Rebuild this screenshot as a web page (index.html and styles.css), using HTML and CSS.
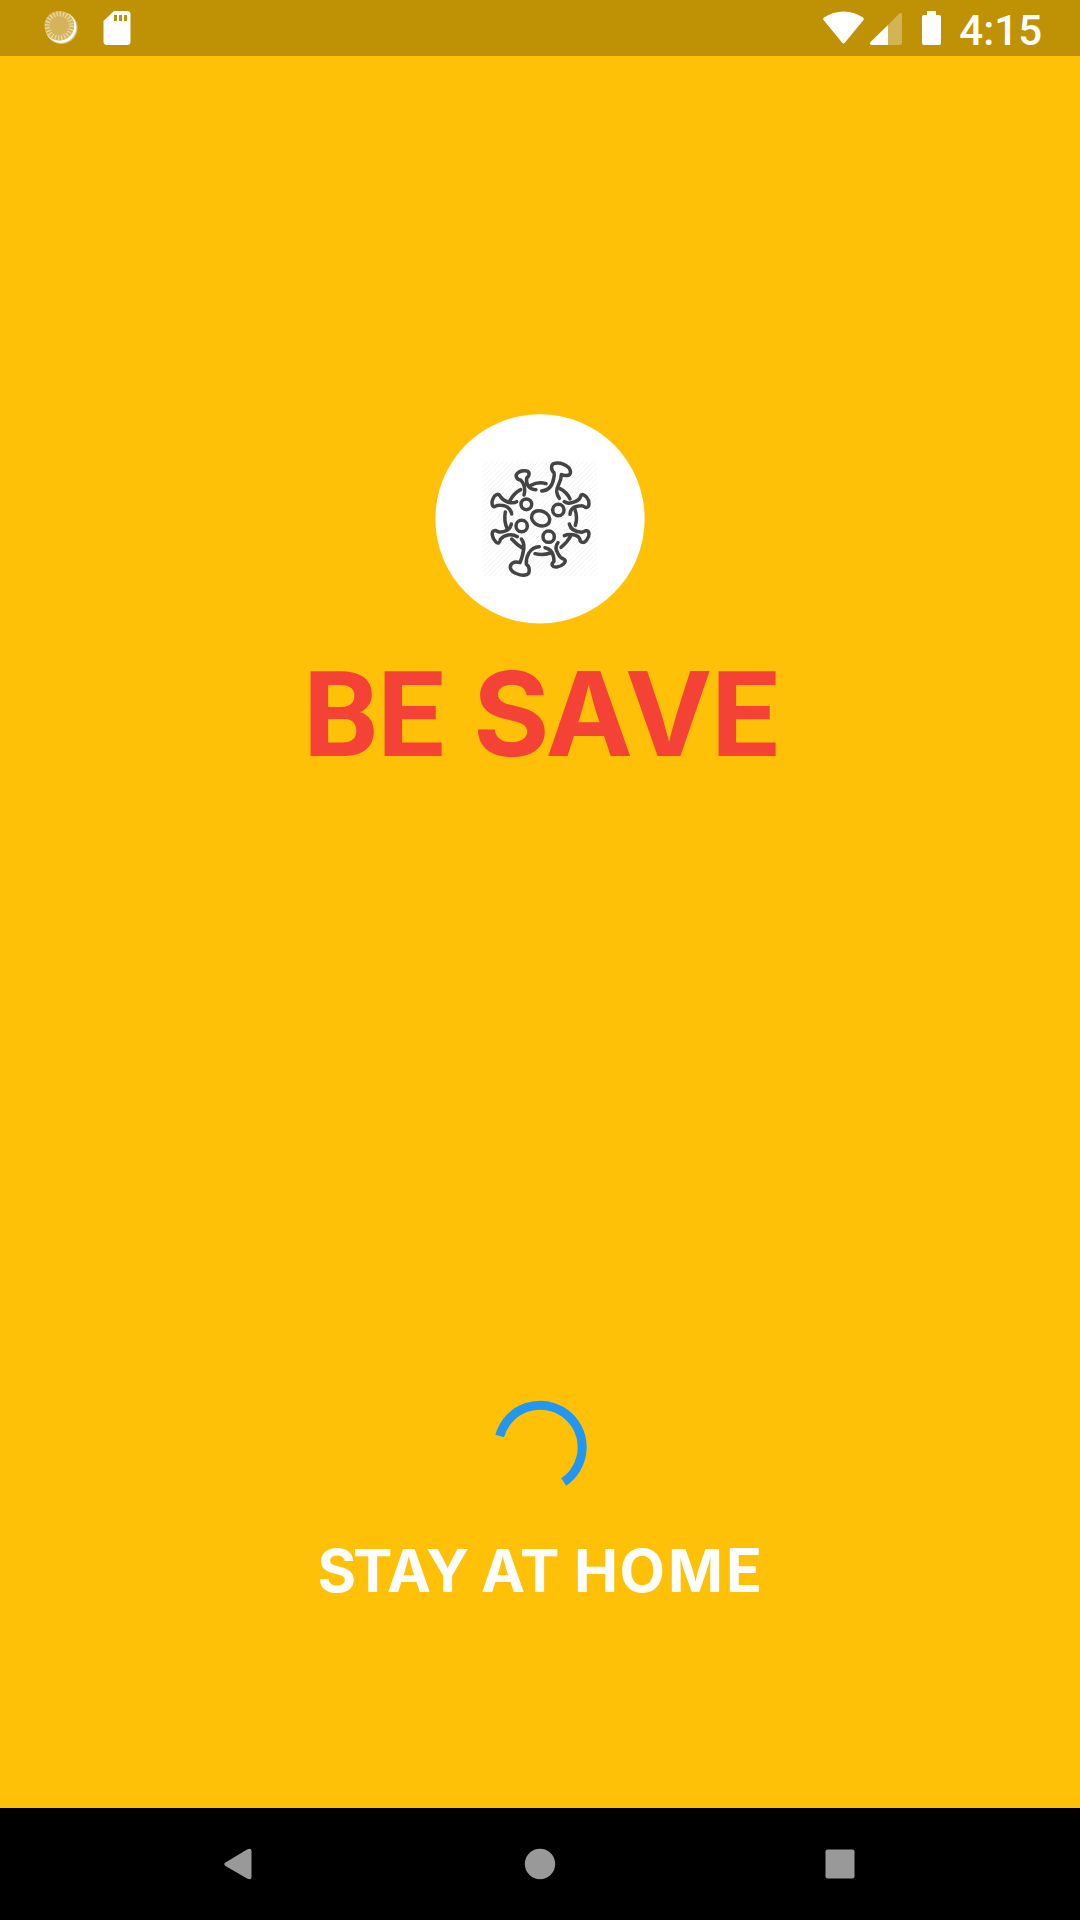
FILE: index.html
```html
<!DOCTYPE html>
<html lang="en">
<head>
<meta charset="utf-8">
<title>Be Save</title>
<link rel="stylesheet" href="styles.css">
</head>
<body>
<header class="status-bar">
  <svg class="notifications" width="200" height="56" viewBox="0 0 200 56">
    <circle cx="61.5" cy="28" r="16" fill="#fff" opacity=".45"/>
    <circle cx="60.8" cy="27.3" r="15.6" fill="#fff"/>
    <circle cx="59.3" cy="25.8" r="14.9" fill="#d4b45a"/>
    <circle cx="59.3" cy="25.8" r="12" fill="none" stroke="#e9d9ad" stroke-width="5" stroke-dasharray="1.2 1.942"/>
    <path fill="#fff" fill-rule="evenodd" d="M114 11h13a3.500 3.500 0 0 1 3.500 3.500v27a3.500 3.500 0 0 1-3.500 3.500h-20a3.500 3.500 0 0 1-3.500-3.500V21zM114 15v6h3v-6zM119 15v6h3v-6zM124 15v6h3v-6z"/>
  </svg>
  <div class="system">
    <svg width="160" height="56" viewBox="799 0 160 56">
      <path fill="#fff" d="M823.500 20Q822.500 18.500 824 17.500Q833 11.500 843.500 11.500T863 17.500Q864.500 18.500 863.500 20L845 42.500Q843.500 44.500 842 42.500z"/>
      <path fill="#fff" opacity=".32" d="M888 25l11-11.200q3-2 3 1V43q0 2-2 2h-12z"/>
      <path fill="#fff" d="M888 25v20h-16q-3-.5-1.500-3z"/>
      <path fill="#fff" d="M927 11h9v4h3q2 0 2 2v26q0 2-2 2h-15q-2 0-2-2V17q0-2 2-2h3z"/>
    </svg>
    <time class="clock">4:15</time>
  </div>
</header>
<main class="splash">
  <section class="brand">
    <svg width="220" height="220" viewBox="0 0 660 660">
      <defs>
        <pattern id="hatch" width="15" height="15" patternUnits="userSpaceOnUse">
          <path d="M-4 19L19-4M-4 4L4-4M11 19L19 11" stroke="#f4f4f4" stroke-width="3"/>
        </pattern>
      </defs>
      <circle cx="330" cy="326.500" r="314" fill="#fff"/>
      <path fill="url(#hatch)" d="M158 155h343v343H158z"/>
      <g class="virus">
        <path d="M335 243C359 242 368 222 371 206Q374 193 372 188C362 180 363 164 371 161C383 156 400 161 410 168C422 175 425 189 417 195Q406 199 394 194C394 217 379 229 380 245Q381 255 388 265"/>
        <path d="M390 236Q411 247 420 267"/>
        <path d="M403 275C419 287 451 271 452 258C453 251 464 253 470 262C479 272 479 290 471 292C463 295 464 286 454 287C436 287 421 292 420 313"/>
        <path d="M434 296Q444 322 436 346"/>
        <path d="M282 255C287 236 281 219 272 210C261 210 255 198 261 191C270 180 293 179 297 188Q299 198 290 204C287 223 297 240 318 239M303 226Q324 214 348 221"/>
        <path d="M272 239Q252 249 239 273"/>
        <path d="M260 275C245 284 219 274 211 259C205 248 194 254 189 266C183 278 187 291 194 290Q201 285 211 286C231 287 242 295 245 312"/>
        <path d="M226 306Q221 331 231 355"/>
        <path d="M244 342C241 361 220 367 208 366C201 366 201 360 193 362C182 364 187 385 196 394C205 404 210 397 211 388C222 375 244 369 262 380"/>
        <path d="M245 387Q261 405 281 417M274 387C288 402 278 438 270 458C251 452 240 461 241 473C243 487 274 501 292 493C301 487 299 469 289 463C287 444 297 411 328 410M315 431Q338 437 361 429"/>
        <path d="M345 413C364 417 372 433 372 454C361 464 367 472 381 471C396 469 410 457 404 449C395 446 390 443 384 431C376 418 377 406 384 398"/>
        <path d="M393 412Q412 397 422 378M403 377C419 369 444 375 449 386C451 401 464 400 471 388C480 378 479 361 468 362L455 367C436 366 422 359 418 342"/>
        <circle cx="289" cy="283" r="16"/><circle cx="385" cy="300" r="17"/><circle cx="275" cy="348" r="17"/><circle cx="356" cy="380" r="17"/>
        <ellipse cx="332" cy="325" rx="28" ry="22" transform="rotate(22 332 325)"/>
      </g>
    </svg>
    <svg class="title" width="500" height="130" viewBox="290 650 500 130">
      <text y="756" x="303 377 450 473 545.500 625 711"><tspan class="narrow">BE</tspan> SAV<tspan class="narrow">E</tspan></text>
    </svg>
  </section>
  <section class="progress">
    <svg width="120" height="120" viewBox="0 0 120 120">
      <path d="M19.700 56A42 42 0 1 1 83.700 102" fill="none" stroke="#2196f3" stroke-width="9"/>
    </svg>
    <svg class="caption" width="480" height="80" viewBox="300 1530 480 80">
      <text y="1592" x="317.500 353 387 426 465 481 520 560 574 619.500 668 726">STAY AT HOM<tspan class="narrow">E</tspan></text>
    </svg>
  </section>
</main>
<nav class="nav-bar">
  <svg width="1080" height="112" viewBox="0 1808 1080 112" fill="#999">
    <path d="M225.500 1862.500L247 1849.500Q251.500 1847.500 251.500 1851V1877Q251.500 1880.500 247 1878.500L225.500 1866Q223 1864 225.500 1862.500z"/>
    <circle cx="540" cy="1864" r="15.200"/>
    <rect x="825.500" y="1849.500" width="29" height="29" rx="2"/>
  </svg>
</nav>
</body>
</html>
```
FILE: styles.css
```css
body {
  margin: 0;
  width: 1080px;
  height: 1920px;
  display: flex;
  flex-direction: column;
  background: #ffc107;
  overflow: hidden;
}

svg {
  display: block;
  overflow: visible;
}

.status-bar {
  height: 56px;
  background: #bf9105;
  display: flex;
  justify-content: space-between;
}

.system {
  display: flex;
  padding-right: 38px;
}

.clock {
  color: #fff;
  font: 500 42px/62px Roboto, sans-serif;
}

.splash {
  height: 1752px;
  display: flex;
  flex-direction: column;
  justify-content: space-between;
  padding: 354px 0 198px;
  box-sizing: border-box;
}

.brand,
.progress {
  display: flex;
  flex-direction: column;
  align-items: center;
}

.brand {
  gap: 20px;
}

.progress {
  gap: 30px;
}

.virus {
  fill: none;
  stroke: #444;
  stroke-width: 10.5;
  stroke-linecap: round;
  stroke-linejoin: round;
}

.title text {
  font: 700 117px Inter, sans-serif;
  fill: #f44336;
}

.title .narrow {
  font: 700 119.500px Roboto, sans-serif;
}

.caption text {
  font: 700 59px Inter, sans-serif;
  fill: #fff;
}

.caption .narrow {
  font: 700 60.500px Roboto, sans-serif;
}

.nav-bar {
  height: 112px;
  background: #000;
}
```
